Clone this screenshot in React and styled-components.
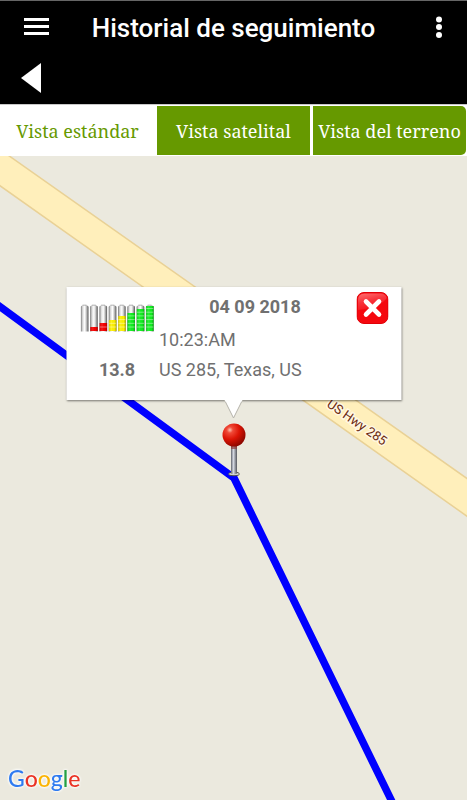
import React, { useState } from "react";
import styled, { createGlobalStyle } from "styled-components";

const GlobalStyle = createGlobalStyle`
  * {
    box-sizing: border-box;
  }
  body {
    margin: 0;
    background-color: #ebe9de;
    font-family: Roboto, sans-serif;
  }
`;

const Page = styled.div`
  display: flex;
  flex-direction: column;
  min-height: 100vh;
`;

const Header = styled.header`
  background-color: #000;
  border-top: 1px solid #666;
`;

const TitleBar = styled.div`
  display: grid;
  grid-template-columns: 1fr auto 1fr;
  align-items: center;
  height: 53px;
  padding: 0 17px;
`;

const BackBar = styled.div`
  display: flex;
  align-items: center;
  height: 50px;
  padding: 0 14px;
`;

const Title = styled.h1`
  margin: 0;
  color: #fff;
  font-size: 26px;
  font-weight: 500;
  line-height: 32px;
  white-space: nowrap;
`;

const IconButton = styled.button`
  display: flex;
  justify-self: ${(props) => props.$align || "start"};
  padding: 0;
  border: 0;
  background: none;
  color: #fff;
  cursor: pointer;
`;

const CloseButton = styled(IconButton)`
  align-self: start;
`;

const Tabs = styled.nav`
  display: grid;
  grid-template-columns: repeat(3, 1fr);
  gap: 3px;
  padding: 1px;
  border-top: 1px solid #c8c8c8;
  background-color: #fff;
`;

const Tab = styled.button`
  height: 49px;
  padding: 0;
  border: 0;
  font-family: "Noto Serif", "DejaVu Serif Condensed", "DejaVu Serif", serif;
  font-size: 18px;
  white-space: nowrap;
  cursor: pointer;
  color: ${(props) => (props.$active ? "#669900" : "#fff")};
  background-color: ${(props) => (props.$active ? "#fff" : "#669900")};

  &:first-child {
    border-radius: 5px 0 0 5px;
  }
  &:last-child {
    border-radius: 0 5px 5px 0;
  }
`;

const MapArea = styled.main`
  position: relative;
  flex: 1;
  min-height: 400px;
  overflow: hidden;
`;

const MapDrawing = styled.svg`
  position: absolute;
  width: 100%;
  height: 100%;
`;

const RoadLabel = styled.text`
  font-size: 13px;
  fill: #6d2a10;
  stroke: #fff8e2;
  stroke-width: 3px;
  paint-order: stroke;
`;

const Pin = styled.svg`
  position: absolute;
  left: 50%;
  bottom: 50%;
  transform: translateX(-50%);
`;

const Popup = styled.section`
  position: absolute;
  left: 50%;
  bottom: calc(50% + 78px);
  transform: translateX(-50%);
  display: grid;
  grid-template-columns: 74px 1fr 32px;
  grid-template-rows: 33px 30px 30px;
  column-gap: 5px;
  align-items: center;
  width: 335px;
  max-width: 94%;
  padding: 5px 13px 15px 14px;
  background-color: #fff;
  box-shadow: 0 1px 2px rgba(0, 0, 0, 0.5);
  color: #707070;
  font-size: 18px;
  line-height: 30px;
`;

const PopupTip = styled.svg`
  position: absolute;
  top: 100%;
  left: 50%;
  transform: translateX(-50%);
`;

const BatterySvg = styled.svg`
  grid-row: 1 / 3;
  align-self: start;
  margin-top: 12px;
`;

const PopupDate = styled.strong`
  align-self: start;
  text-align: center;
`;

const PopupText = styled.span`
  grid-column: 2 / 4;
`;

const Voltage = styled.strong`
  text-align: center;
`;

const Logo = styled.div`
  position: absolute;
  left: 8px;
  bottom: 6px;
  font-family: Lato, sans-serif;
  font-size: 23px;
  font-weight: 500;
  line-height: 32px;
  filter: drop-shadow(0 0 1px #fff) drop-shadow(0 0 1px #fff);
`;

const Letter = styled.span`
  color: ${(props) => props.$color};
`;

const views = ["Vista estándar", "Vista satelital", "Vista del terreno"];

const batteries = [
  { level: 0, color: "#fff" },
  { level: 4, color: "#f80000" },
  { level: 8, color: "#f80000" },
  { level: 11, color: "#fff200" },
  { level: 15, color: "#fff200" },
  { level: 18, color: "#10f020" },
  { level: 22, color: "#10f020" },
  { level: 25, color: "#10f020" },
];

const logoLetters = [
  ["G", "#2f7bf0"],
  ["o", "#ea3425"],
  ["o", "#fbb405"],
  ["g", "#2f7bf0"],
  ["l", "#24a043"],
  ["e", "#ea3425"],
];

const BatteryLevels = () => (
  <BatterySvg width="74" height="28" viewBox="0 0 74 28" aria-hidden="true">
    <defs>
      <linearGradient id="cell">
        <stop offset="0" stopColor="#777" />
        <stop offset="0.25" stopColor="#ddd" />
        <stop offset="0.5" stopColor="#fff" />
        <stop offset="0.7" stopColor="#ccc" />
        <stop offset="1" stopColor="#555" />
      </linearGradient>
      <linearGradient id="shade">
        <stop offset="0" stopColor="#000" stopOpacity="0.15" />
        <stop offset="0.35" stopColor="#fff" stopOpacity="0.1" />
        <stop offset="0.7" stopColor="#000" stopOpacity="0" />
        <stop offset="1" stopColor="#000" stopOpacity="0.3" />
      </linearGradient>
    </defs>
    {batteries.map((battery, index) => (
      <g key={index} transform={`translate(${index * 9.3} 0)`}>
        <path d="M2 2V.8h4V2" fill="#999" />
        <path d="M.3 27.500V3Q.3 1.400 2 1.400h4.300q1.700 0 1.700 1.600v24.500z" fill="url(#cell)" />
        <rect x="0.5" y={27 - battery.level} width="7.5" height={battery.level} fill={battery.color} />
        <rect x="0.5" y={27 - battery.level} width="7.5" height={battery.level} fill="url(#shade)" />
        {[23, 19.3, 15.6, 11.9, 8.2, 4.5]
          .filter((y) => y > 28 - battery.level)
          .map((y) => (
            <path key={y} d={`M.7 ${y}h7`} stroke="#fff" strokeOpacity="0.6" strokeWidth="0.7" />
          ))}
      </g>
    ))}
  </BatterySvg>
);

const CloseIcon = () => (
  <svg width="32" height="32" viewBox="0 0 32 32">
    <defs>
      <linearGradient id="gloss" x1="0" y1="0" x2="0.4" y2="1">
        <stop offset="0" stopColor="#ff7070" />
        <stop offset="0.5" stopColor="#f8343c" />
        <stop offset="1" stopColor="#f5141c" />
      </linearGradient>
    </defs>
    <rect x="0.5" y="0.5" width="31" height="31" rx="7" fill="#f5080f" stroke="#e00008" />
    <path d="M1.500 18V8q0-6.500 6.500-6.500h16q5 0 6.300 4.500Q24 15 1.500 18z" fill="url(#gloss)" />
    <path d="M9.500 9.500l13 13M22.500 9.500l-13 13" stroke="#fff" strokeWidth="4.6" strokeLinecap="round" />
  </svg>
);

const PinIcon = () => (
  <Pin width="26" height="56" viewBox="0 0 26 56" aria-hidden="true">
    <defs>
      <radialGradient id="head" cx="0.32" cy="0.28" r="0.75">
        <stop offset="0" stopColor="#ffc0b0" />
        <stop offset="0.18" stopColor="#f04a38" />
        <stop offset="0.55" stopColor="#dc1405" />
        <stop offset="1" stopColor="#8e0800" />
      </radialGradient>
      <linearGradient id="stem">
        <stop offset="0" stopColor="#60636b" />
        <stop offset="0.4" stopColor="#d5d9e2" />
        <stop offset="1" stopColor="#55575d" />
      </linearGradient>
    </defs>
    <ellipse cx="13" cy="52" rx="5.5" ry="1.8" fill="#d4d4ce" stroke="#44443f" strokeWidth="0.9" />
    <path d="M10 22h6v29.500q-3 1.500-6 0z" fill="url(#stem)" />
    <path d="M10 22h6v5h-6z" fill="#8f3d3d" fillOpacity="0.7" />
    <circle cx="13" cy="13" r="11.5" fill="url(#head)" />
  </Pin>
);

const PointPopup = ({ point, onClose }) => (
  <Popup>
    <BatteryLevels />
    <PopupDate>{point.date}</PopupDate>
    <CloseButton aria-label="Cerrar" onClick={onClose}>
      <CloseIcon />
    </CloseButton>
    <PopupText>{point.time}</PopupText>
    <Voltage>{point.voltage}</Voltage>
    <PopupText>{point.address}</PopupText>
    <PopupTip width="20" height="20" viewBox="0 0 20 20" aria-hidden="true">
      <path d="M1 0l9 18 9-18" fill="#fff" stroke="#b5b3aa" strokeWidth="1" />
      <path d="M1.500 0h17" stroke="#fff" strokeWidth="3" />
    </PopupTip>
  </Popup>
);

const point = {
  date: "04 09 2018",
  time: "10:23:AM",
  voltage: "13.8",
  address: "US 285, Texas, US",
};

const App = () => {
  const [view, setView] = useState(views[0]);
  const [open, setOpen] = useState(true);

  return (
    <Page>
      <GlobalStyle />
      <Header>
        <TitleBar>
          <IconButton aria-label="Menú">
            <svg width="38" height="32" viewBox="0 0 38 32">
              <path d="M7 7.500h25M7 14.500h25M7 21.500h25" stroke="#fff" strokeWidth="3" />
            </svg>
          </IconButton>
          <Title>Historial de seguimiento</Title>
          <IconButton aria-label="Más opciones" $align="end">
            <svg width="22" height="32" viewBox="0 0 22 32" fill="#fff">
              <circle cx="11" cy="7.5" r="3" />
              <circle cx="11" cy="15" r="3" />
              <circle cx="11" cy="23" r="3" />
            </svg>
          </IconButton>
        </TitleBar>
        <BackBar>
          <IconButton aria-label="Atrás">
            <svg width="38" height="38" viewBox="0 0 38 38">
              <path d="M7 18L27 3v30z" fill="#fff" />
            </svg>
          </IconButton>
        </BackBar>
      </Header>

      <Tabs>
        {views.map((name) => (
          <Tab key={name} $active={view === name} onClick={() => setView(name)}>
            {name}
          </Tab>
        ))}
      </Tabs>

      <MapArea>
        <MapDrawing viewBox="0 0 467 644" preserveAspectRatio="xMidYMid slice">
          <path
            d="M-100 -77L567 393V431L-100 -41z"
            fill="#ffefbb"
            stroke="#e9d196"
            strokeWidth="1.5"
          />
          <RoadLabel transform="translate(326 250) rotate(35)">US Hwy 285</RoadLabel>
          <path
            d="M-100 77.500L234 322L440 744"
            fill="none"
            stroke="#0000ff"
            strokeWidth="7.5"
            strokeLinejoin="round"
          />
        </MapDrawing>
        <PinIcon />
        {open && <PointPopup point={point} onClose={() => setOpen(false)} />}
        <Logo>
          {logoLetters.map(([letter, color], index) => (
            <Letter key={index} $color={color}>
              {letter}
            </Letter>
          ))}
        </Logo>
      </MapArea>
    </Page>
  );
};

export default App;
